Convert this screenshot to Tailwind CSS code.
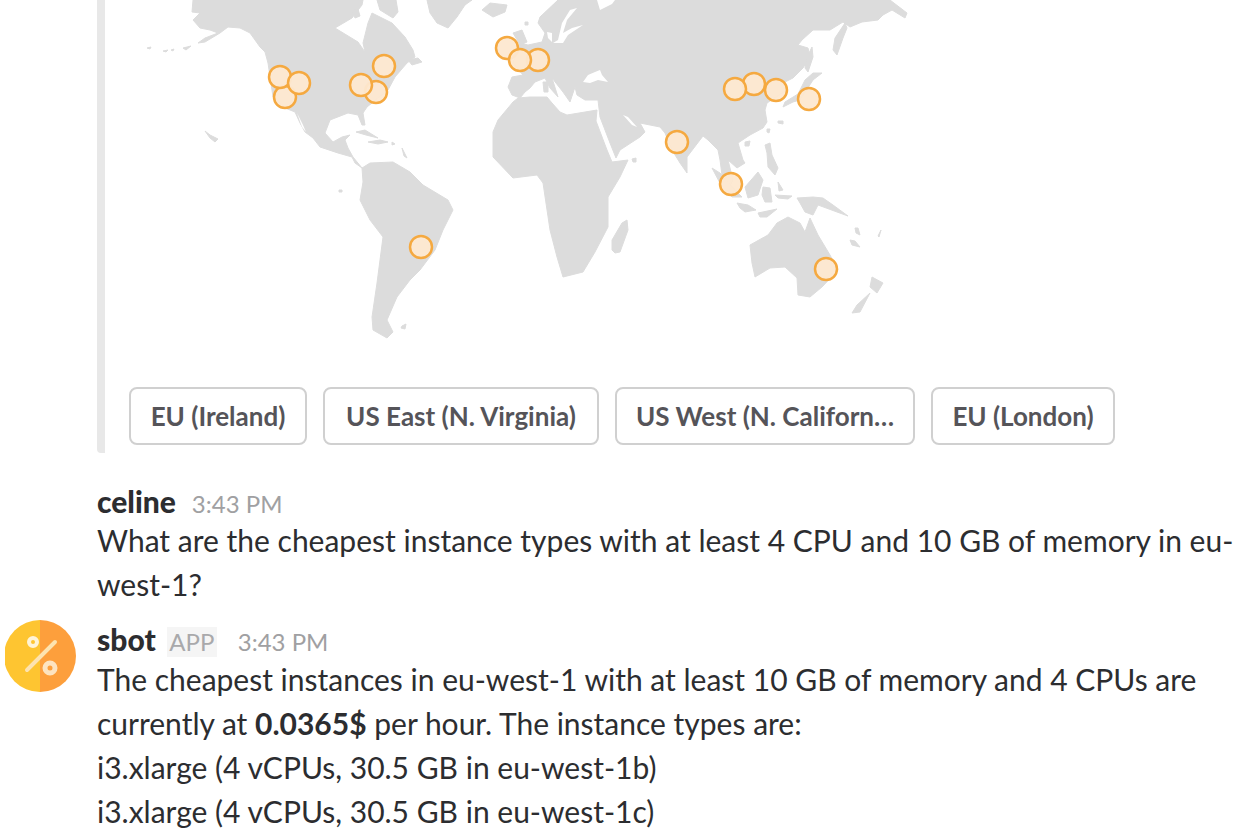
<!DOCTYPE html>
<html lang="en">
<head>
  <meta charset="UTF-8">
  <title>sbot</title>
  <script src="https://cdn.jsdelivr.net/npm/@tailwindcss/browser@4"></script>
</head>
<body class="bg-white">
  <div class="w-[1253px] h-[836px] overflow-hidden font-['Lato',sans-serif] text-[#2c2d30]">
    <!-- Attachment with map and region buttons -->
    <div class="ml-[97px] w-[1156px] h-[453px] border-l-[8px] border-[#e8e8e8] rounded-b-[4px]">
      <svg class="block blur-[0.4px]" width="1148" height="387" viewBox="105 0 1148 387">
        <g fill="#dcdcdc" stroke="#dcdcdc" stroke-width="1" stroke-linejoin="round">
          <!-- North America -->
          <path d="M193 0L192 12L200 13L193 20L200 28L210 30L218 33L205 38L198 43L205 42L220 33L228 27L240 28L250 33L260 47L265 52L268 63L273 97L285 108L295 112L300 123L305 132L313 138L320 147L338 153L352 157L355 163L362 168L353 157L348 148L345 140L350 135L342 137L333 142L325 133L330 120L348 113L358 115L362 125L365 125L363 113L367 107L388 90L395 77L407 63L415 57L413 50L405 37L392 23L372 13L368 23L363 43L365 52L358 42L335 28L352 18L362 5L363 0Z"/>
          <path d="M377 0L380 10L393 18L398 12L396 0Z"/>
          <path d="M352 10L358 9L360 16L355 18Z"/>
          <path d="M427 0L430 13L437 23L448 28L457 17L465 5L472 0Z"/>
          <path d="M482 10L490 3L507 5L505 12L493 17Z"/>
          <path d="M408 60L418 58L422 62L412 65Z"/>
          <!-- South America -->
          <path d="M362 168L370 163L393 162L410 172L423 185L448 200L453 210L443 230L435 250L420 270L410 280L397 297L387 320L393 332L387 338L373 330L372 317L377 283L383 237L370 220L360 200L363 182Z"/>
          <path d="M402 326L406 324L405 329L401 328Z"/>
          <!-- Caribbean, Pacific dots -->
          <path d="M356 132L365 130L378 138L366 135ZM368 142L380 140L388 142L378 144ZM392 142L395 144L392 145ZM402 148L407 158L404 156Z"/>
          <path d="M205 131L210 135L218 139L215 142L210 138Z"/>
          <path d="M147 48L151 47L150 49ZM163 51L168 50L166 52ZM171 50L174 49L173 51ZM183 48L191 46L186 50ZM339 190L342 190L342 192L339 192Z"/>
          <!-- Eurasia -->
          <path d="M538 23L540 17L558 0L890 0L907 13L905 18L892 10L883 15L878 20L862 22L850 27L843 22L830 30L813 30L802 40L798 45L808 48L810 57L803 68L793 78L785 82L787 90L767 103L765 110L767 122L763 128L750 135L738 143L743 160L745 163L737 168L728 160L733 180L728 190L722 175L720 160L718 150L708 140L703 136L687 157L687 173L680 163L672 150L665 133L660 127L640 123L645 132L640 137L620 150L616 158L610 143L600 117L598 100L585 100L577 95L575 87L573 93L570 102L563 92L552 78L558 97L550 88L545 78L535 82L530 88L525 92L520 98L512 95L508 87L512 77L523 75L513 63L520 43L528 45L542 42L545 33Z"/>
          <path d="M513 33L522 30L527 42L520 45Z"/>
          <path d="M525 22L528 22L528 25L525 25Z"/>
          <path d="M543 82L548 82L548 92L544 92Z"/>
          <!-- Africa and Madagascar -->
          <path d="M493 132L498 120L513 102L518 98L530 97L547 97L552 103L560 112L567 115L597 110L596 121L607 150L612 162L628 160L620 177L608 197L608 227L595 252L583 272L563 277L557 257L550 230L543 183L537 175L513 178L493 157Z"/>
          <path d="M612 250L612 240L622 223L627 220L628 230L620 252L615 253Z"/>
          <path d="M632 159L636 158L636 162L633 162Z"/>
          <!-- East Asia islands -->
          <path d="M833 50L835 38L845 23L847 28L843 38L837 55Z"/>
          <path d="M812 47L813 57L808 72L805 68L807 57Z"/>
          <path d="M805 80L813 73L822 73L813 80L800 100L793 102L783 107L785 102L798 94Z"/>
          <path d="M778 121L783 121L783 124L778 123Z"/>
          <path d="M745 142L750 141L749 146L745 146Z"/>
          <path d="M765 145L770 143L772 155L778 168L775 175L768 167L767 153Z"/>
          <path d="M767 129L770 129L769 133L767 132Z"/>
          <!-- Indonesia and New Guinea -->
          <path d="M712 168L720 173L737 192L742 197L732 197L722 187Z"/>
          <path d="M737 203L748 205L756 210L745 212L740 208Z"/>
          <path d="M745 187L758 172L763 180L758 195L748 198Z"/>
          <path d="M763 187L770 188L772 202L765 202L762 195Z"/>
          <path d="M778 182L783 190L779 191Z"/>
          <path d="M758 213L777 209L767 217L760 217Z"/>
          <path d="M797 198L813 197L823 198L833 205L848 216L837 212L818 205L813 215L805 212L800 203Z"/>
          <path d="M775 195L792 196L788 199L778 198Z"/>
          <path d="M855 228L858 228L860 235L856 233ZM850 240L855 241L860 247L852 245ZM881 230L879 237L878 236Z"/>
          <!-- Australia and New Zealand -->
          <path d="M750 245L768 235L777 223L788 217L800 223L805 232L810 218L818 235L830 255L838 270L822 287L810 297L798 295L797 278L785 267L770 268L755 277L752 263Z"/>
          <path d="M872 277L883 283L877 293L870 287Z"/>
          <path d="M870 293L860 312L852 313L857 305Z"/>
        </g>
        <g fill="#ffffff">
          <path d="M553 43L563 43L568 35L583 25L572 28L563 33L567 20L577 8L570 10L562 23L558 40Z"/>
          <path d="M547 32L552 33L552 42L548 38Z"/>
          <path d="M583 82L588 75L595 72L600 70L602 75L608 82L598 80L590 83Z"/>
          <path d="M623 115L628 117L637 127L632 125Z"/>
          <path d="M597 0L615 0L612 4L600 10Z"/>
          <path d="M297 113L303 125L306 132L302 127Z"/>
        </g>
        <g fill="#fde8d0" fill-opacity="0.95" stroke="#f5a940" stroke-width="2.5">
          <circle cx="285" cy="97" r="11"/>
          <circle cx="280" cy="77" r="11"/>
          <circle cx="299" cy="83" r="11"/>
          <circle cx="376" cy="92" r="11"/>
          <circle cx="361" cy="85" r="11"/>
          <circle cx="384" cy="66" r="11"/>
          <circle cx="421" cy="247" r="11"/>
          <circle cx="507" cy="48" r="11"/>
          <circle cx="538" cy="60" r="11"/>
          <circle cx="520" cy="60" r="11"/>
          <circle cx="754" cy="84" r="11"/>
          <circle cx="735" cy="89" r="11"/>
          <circle cx="776" cy="90" r="11"/>
          <circle cx="809" cy="99" r="11"/>
          <circle cx="677" cy="142" r="11"/>
          <circle cx="731" cy="184" r="11"/>
          <circle cx="826" cy="269" r="11"/>
        </g>
      </svg>
      <div class="flex gap-4 pl-[24px]">
        <button class="w-[178px] h-[58px] border-2 border-[#d0d0d0] rounded-lg text-[26px] font-bold text-[#555459]">EU (Ireland)</button>
        <button class="w-[276px] h-[58px] border-2 border-[#d0d0d0] rounded-lg text-[26px] font-bold text-[#555459]">US East (N. Virginia)</button>
        <button class="w-[300px] h-[58px] border-2 border-[#d0d0d0] rounded-lg text-[26px] font-bold text-[#555459]">US West (N. Californ…</button>
        <button class="w-[184px] h-[58px] border-2 border-[#d0d0d0] rounded-lg text-[26px] font-bold text-[#555459]">EU (London)</button>
      </div>
    </div>

    <!-- celine -->
    <div class="pl-[97px] pt-[27px]">
      <div class="flex items-baseline gap-4 h-[38px]">
        <span class="text-[30px] font-black leading-[42px]">celine</span>
        <span class="text-[24px] text-[#a0a0a2]">3:43 PM</span>
      </div>
      <p class="text-[30px] leading-[44px] w-[1140px]">What are the cheapest instance types with at least 4 CPU and 10 GB of memory in eu-west-1?</p>
    </div>

    <!-- sbot -->
    <div class="flex mt-[13px]">
      <div class="w-[97px] shrink-0 pl-[5px] pt-[1px]">
        <svg width="72" height="72" viewBox="0 0 72 72">
          <path d="M35 0A36 36 0 0 0 35 72Z" fill="#fec531"/>
          <path d="M35 0A36 36 0 0 1 35 72Z" fill="#fd9f3c"/>
          <path d="M22 50L50 22" stroke="#fde3b0" stroke-width="4" stroke-linecap="round"/>
          <circle cx="28" cy="22" r="4" fill="#fec531" stroke="#fff4d6" stroke-width="4"/>
          <circle cx="45" cy="48" r="5" fill="#fd9f3c" stroke="#fde3c0" stroke-width="5"/>
        </svg>
      </div>
      <div class="w-[1140px]">
        <div class="flex items-baseline h-[38px]">
          <span class="text-[30px] font-black leading-[40px]">sbot</span>
          <span class="ml-[11px] w-[50px] text-center text-[24px] leading-[30px] bg-[#f5f5f5] text-[#a9a9ab]">APP</span>
          <span class="ml-[21px] text-[24px] text-[#a0a0a2]">3:43 PM</span>
        </div>
        <p class="text-[30px] leading-[44px]">The cheapest instances in eu-west-1 with at least 10 GB of memory and 4 CPUs are currently at <b>0.0365$</b> per hour. The instance types are:<br>i3.xlarge (4 vCPUs, 30.5 GB in eu-west-1b)<br>i3.xlarge (4 vCPUs, 30.5 GB in eu-west-1c)</p>
      </div>
    </div>
  </div>
</body>
</html>
